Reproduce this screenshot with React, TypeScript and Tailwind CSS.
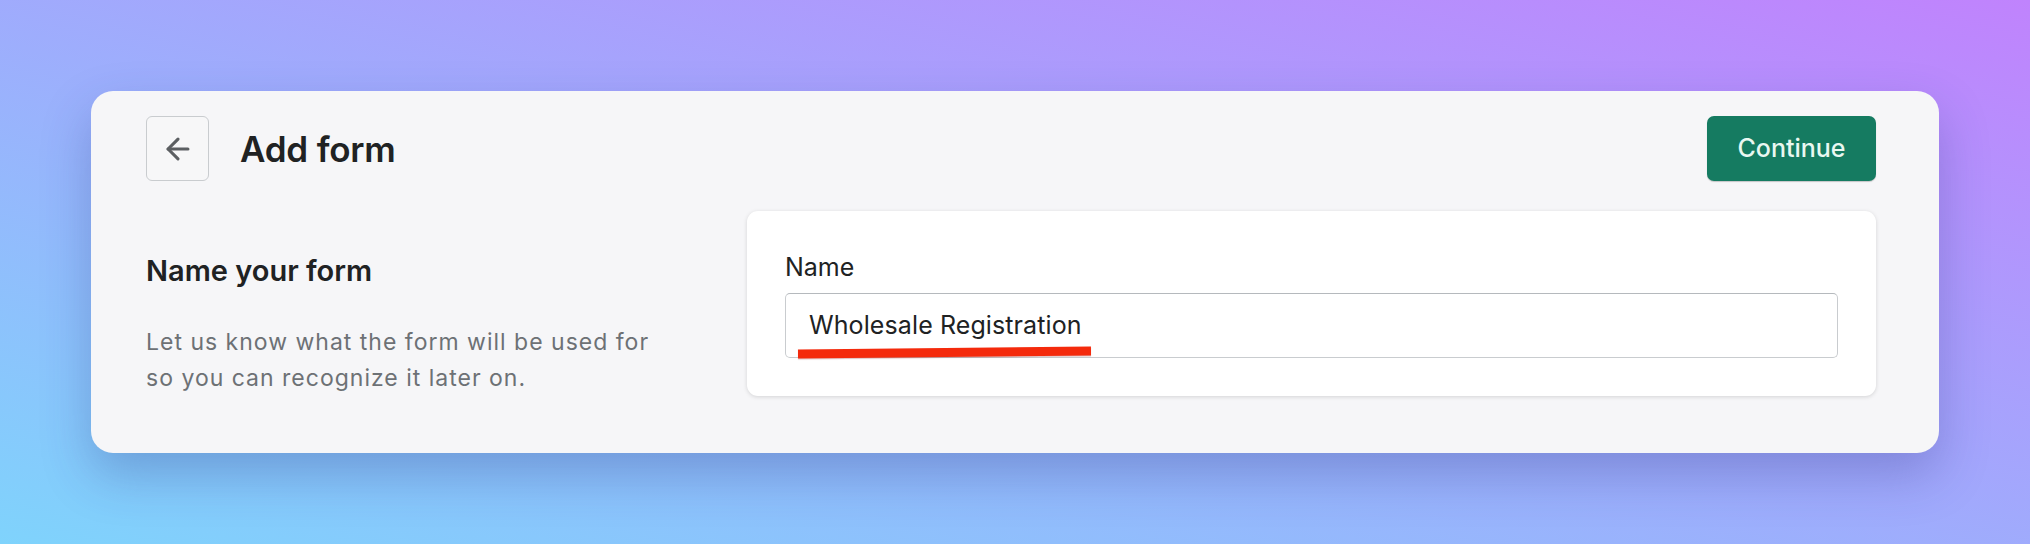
import { ArrowLeft } from "lucide-react";

function BackButton() {
  return (
    <button className="w-[63px] h-[65px] shrink-0 flex items-center justify-center rounded-[6px] border border-[#c9cccf] bg-[#f7f7f8] text-[#5c5f62]">
      <ArrowLeft className="w-[34px] h-[34px]" strokeWidth={2.2} />
    </button>
  );
}

function NameField() {
  return (
    <div className="flex-1 bg-white rounded-[11px] shadow-[0_1px_4px_rgba(0,0,0,0.14)] px-[38px] pt-[38px] pb-[38px]">
      <label className="block text-[25px] leading-[36px] text-[#202223]">Name</label>
      <div className="relative mt-[8px]">
        <div className="h-[65px] flex items-center px-[23px] rounded-[5px] border border-[#c9cccf] border-t-[#b5b9bd] bg-white text-[25px] tracking-[0.1px] text-[#202223]">
          Wholesale Registration
        </div>
        {/* marker annotation */}
        <div className="absolute left-[13px] top-[55px] w-[293px] h-[9px] bg-[#f42a0c] -rotate-[0.55deg] shadow-[0_1px_1px_rgba(120,0,0,0.25)]" />
      </div>
    </div>
  );
}

export default function App() {
  return (
    <div
      className="w-[2030px] h-[544px] p-[91px] bg-[linear-gradient(to_top_right,#7fd3fc,#c083fd)]"
      style={{ fontFamily: "Inter, 'Noto Sans', sans-serif" }}
    >
      <section className="h-full rounded-[22px] bg-[#f6f6f8] shadow-[0_22px_50px_rgba(40,50,130,0.28)] pl-[55px] pr-[63px] pt-[25px]">
        <header className="flex items-center justify-between">
          <div className="flex items-center gap-[31px]">
            <BackButton />
            <h1 className="text-[35px] leading-[44px] font-semibold text-[#202223] tracking-[-0.2px]">Add form</h1>
          </div>
          <button className="w-[169px] h-[65px] rounded-[7px] bg-[#157b61] text-[#e9f8f1] text-[25px] font-medium shadow-[0_1px_1px_rgba(0,0,0,0.2)]">
            Continue
          </button>
        </header>

        <div className="flex mt-[30px]">
          <aside className="w-[601px] shrink-0 pt-[42px] pr-[40px]">
            <h2 className="text-[29px] leading-[36px] font-semibold text-[#202223]">Name your form</h2>
            <p className="mt-[35px] text-[23px] leading-[36px] tracking-[1px] text-[#6d7175]">
              Let us know what the form will be used for
              <br />
              so you can recognize it later on.
            </p>
          </aside>
          <NameField />
        </div>
      </section>
    </div>
  );
}
